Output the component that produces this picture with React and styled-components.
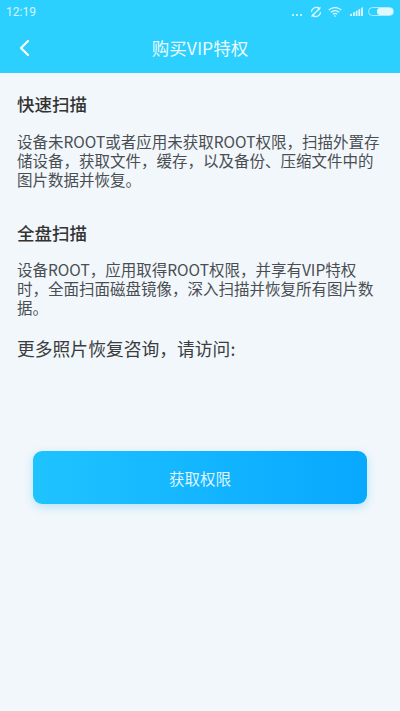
import React from 'react';
import styled, { createGlobalStyle } from 'styled-components';

const GlobalStyle = createGlobalStyle`
  html, body {
    margin: 0;
    padding: 0;
    background: #f2f7fb;
  }
  body {
    font-family: "Noto Sans CJK SC", "Liberation Sans", sans-serif;
  }
`;

const Page = styled.div`
  width: 400px;
  height: 711px;
  overflow: hidden;
  background: #f2f7fb;
  display: flex;
  flex-direction: column;
`;

const Header = styled.header`
  height: 73px;
  background: #2bd0fe;
  color: #fff;
  display: flex;
  flex-direction: column;
`;

const StatusBar = styled.div`
  height: 23px;
  padding: 0 6px;
  display: flex;
  align-items: center;
  justify-content: space-between;
`;

const Clock = styled.span`
  font-family: "Roboto", sans-serif;
  font-size: 12px;
  color: rgba(255, 255, 255, 0.8);
`;

const StatusIcons = styled.div`
  display: flex;
  align-items: center;
  opacity: 0.85;
`;

const StatusIcon = styled.svg`
  display: block;
  margin-left: ${(p) => p.$left || 0}px;
  transform: translateY(${(p) => p.$drop || 0}px);
`;

const NavBar = styled.div`
  flex: 1;
  position: relative;
  display: flex;
  align-items: center;
  justify-content: center;
  padding-bottom: 1px;
`;

const BackButton = styled.button`
  position: absolute;
  left: 16px;
  top: 15px;
  width: 14px;
  height: 20px;
  padding: 0;
  border: 0;
  background: none;
  display: flex;
`;

const Title = styled.h1`
  margin: 0;
  font-size: 17.5px;
  font-weight: 400;
  color: rgba(255, 255, 255, 0.92);
`;

const Content = styled.main`
  flex: 1;
  padding: 19px 17px 0 17px;
  display: flex;
  flex-direction: column;
`;

const SectionTitle = styled.h2`
  margin: 0 0 ${(p) => p.$gap}px;
  font-size: 17.5px;
  line-height: 24px;
  font-weight: 500;
  color: #333;
`;

const Body = styled.p`
  margin: 0 0 ${(p) => p.$gap}px;
  font-size: 15.5px;
  line-height: 19px;
  color: #4a4e52;
  width: 366px;
`;

const MoreLine = styled.p`
  margin: 0;
  font-size: 17.8px;
  line-height: 24px;
  color: #3a3d40;
`;

const PrimaryButton = styled.button`
  align-self: center;
  margin: 91px 0 0 0;
  width: 334px;
  height: 53px;
  border: 0;
  border-radius: 9px;
  background: linear-gradient(90deg, #1fc3ff, #08a8ff);
  box-shadow: 0 3px 10px rgba(60, 190, 250, 0.35);
  color: rgba(255, 255, 255, 0.88);
  font-family: inherit;
  font-size: 15.5px;
`;

const Dots = () => (
  <StatusIcon width="12" height="4" viewBox="0 0 12 4" fill="#fff" $drop={3}>
    <circle cx="2" cy="2" r="1.1" />
    <circle cx="6" cy="2" r="1.1" />
    <circle cx="10" cy="2" r="1.1" />
  </StatusIcon>
);

const SyncOff = () => (
  <StatusIcon width="12" height="12" viewBox="0 0 12 12" fill="none" stroke="#fff" strokeWidth="1.2" $left={7}>
    <path d="M1.5 6a4.5 4.5 0 0 1 7.2-3.6M10.5 6a4.5 4.5 0 0 1-7.2 3.6" />
    <path d="M7 1l2.4 1.2L8.6 4.4M5 11L2.6 9.8l.8-2.2" />
    <path d="M10.5 1.5l-9 9" />
  </StatusIcon>
);

const Wifi = () => (
  <StatusIcon width="14" height="10" viewBox="0 0 14 10" fill="none" stroke="#fff" strokeWidth="1.2" $left={6}>
    <path d="M.6 3.2a9 9 0 0 1 12.8 0M2.8 5.3a6 6 0 0 1 8.4 0M4.9 7.3a3 3 0 0 1 4.2 0" />
    <circle cx="7" cy="9.1" r="0.8" fill="#fff" stroke="none" />
  </StatusIcon>
);

const Signal = () => (
  <StatusIcon width="13" height="9" viewBox="0 0 13 9" fill="#fff" $left={8}>
    <path d="M0 7.5L2 6.4V9H0zM3 5.8l1.8-1V9H3zM5.7 4.3l1.8-1V9H5.7zM8.4 2.8l1.8-1V9H8.4zM11.1 1.2L13 0v9h-1.9z" />
  </StatusIcon>
);

const Battery = () => (
  <StatusIcon width="26" height="9" viewBox="0 0 26 9" $left={5}>
    <rect x="0.5" y="0.5" width="25" height="8" rx="4" fill="none" stroke="#fff" strokeOpacity="0.7" />
    <rect x="9" y="1" width="16" height="7" rx="3" fill="#fff" />
  </StatusIcon>
);

export default function App() {
  return (
    <Page>
      <GlobalStyle />
      <Header>
        <StatusBar>
          <Clock>12:19</Clock>
          <StatusIcons>
            <Dots />
            <SyncOff />
            <Wifi />
            <Signal />
            <Battery />
          </StatusIcons>
        </StatusBar>
        <NavBar>
          <BackButton aria-label="back">
            <svg width="14" height="20" viewBox="0 0 14 20" fill="none" stroke="#fff" strokeWidth="2.2" strokeLinecap="round" strokeLinejoin="round">
              <path d="M12 3L5 10l7 7" />
            </svg>
          </BackButton>
          <Title>购买VIP特权</Title>
        </NavBar>
      </Header>
      <Content>
        <SectionTitle $gap={16}>快速扫描</SectionTitle>
        <Body $gap={32}>
          设备未ROOT或者应用未获取ROOT权限，扫描外置存储设备，获取文件，缓存，以及备份、压缩文件中的图片数据并恢复。
        </Body>
        <SectionTitle $gap={15}>全盘扫描</SectionTitle>
        <Body $gap={19}>
          设备ROOT，应用取得ROOT权限，并享有VIP特权时，全面扫面磁盘镜像，深入扫描并恢复所有图片数据。
        </Body>
        <MoreLine>更多照片恢复咨询，请访问:</MoreLine>
        <PrimaryButton>获取权限</PrimaryButton>
      </Content>
    </Page>
  );
}
